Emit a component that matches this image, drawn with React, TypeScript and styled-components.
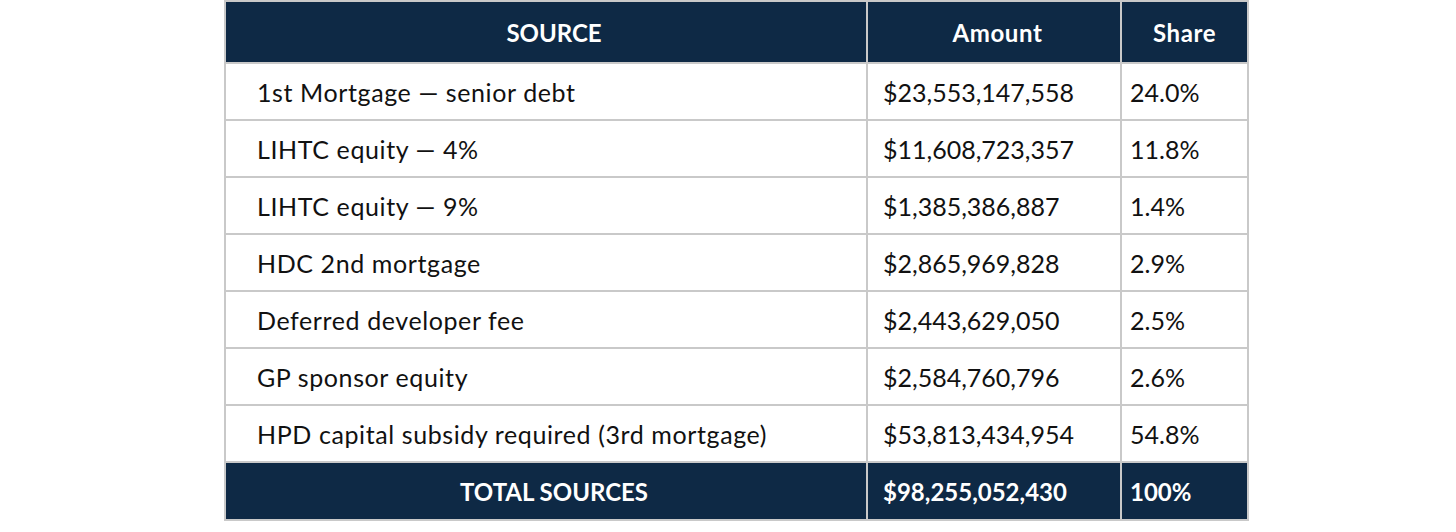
import React from 'react';
import styled, { createGlobalStyle } from 'styled-components';

type SourceRow = {
  id: number;
  label: string;
  amount: string;
  share: string;
};

const ROWS: SourceRow[] = [
  { id: 1, label: '1st Mortgage — senior debt', amount: '$23,553,147,558', share: '24.0%' },
  { id: 2, label: 'LIHTC equity — 4%', amount: '$11,608,723,357', share: '11.8%' },
  { id: 3, label: 'LIHTC equity — 9%', amount: '$1,385,386,887', share: '1.4%' },
  { id: 4, label: 'HDC 2nd mortgage', amount: '$2,865,969,828', share: '2.9%' },
  { id: 5, label: 'Deferred developer fee', amount: '$2,443,629,050', share: '2.5%' },
  { id: 6, label: 'GP sponsor equity', amount: '$2,584,760,796', share: '2.6%' },
  { id: 7, label: 'HPD capital subsidy required (3rd mortgage)', amount: '$53,813,434,954', share: '54.8%' }
];

const GlobalStyle = createGlobalStyle`
  html, body {
    margin: 0;
    padding: 0;
    background: #fff;
  }
  body {
    font-family: 'Lato', 'Liberation Sans', sans-serif;
  }
`;

const Page = styled.div`
  width: 1456px;
  height: 532px;
  display: flex;
  justify-content: center;
  padding-left: 17px;
  box-sizing: border-box;
`;

const Table = styled.table`
  width: 1024px;
  height: 521px;
  border-collapse: collapse;
  table-layout: fixed;
  border: 2px solid #c9c9c9;
  border-top: 1px solid #c9c9c9;
  font-family: 'Lato', 'Liberation Sans', sans-serif;
  color: #111;
`;

const DarkRow = styled.tr<{ height: number }>`
  height: ${(p) => p.height}px;
  background: #0e2945;
  color: #fff;
  font-size: 24px;
  font-weight: 700;
`;

const BodyRow = styled.tr`
  height: 57px;
  background: #fff;
  font-size: 25px;
`;

const Cell = styled.td<{ pad: string; align?: 'left' | 'center'; spacing?: number }>`
  padding: ${(p) => p.pad};
  text-align: ${(p) => p.align || 'left'};
  letter-spacing: ${(p) => p.spacing || 0}px;
  border: 2px solid #c9c9c9;
  white-space: nowrap;
  vertical-align: middle;
`;

const HeadCell = styled(Cell).attrs({ as: 'th' })``;

const SOURCE_PAD = '0 15px 0 31px';
const AMOUNT_PAD = '0 8px 0 15px';
const SHARE_PAD = '0 8px 0 8px';

export default function App() {
  return (
    <Page>
      <GlobalStyle />
      <Table>
        <colgroup>
          <col style={{ width: 642 }} />
          <col style={{ width: 254 }} />
          <col style={{ width: 127 }} />
        </colgroup>
        <thead>
          <DarkRow height={62}>
            <HeadCell pad={SOURCE_PAD} align="center">SOURCE</HeadCell>
            <HeadCell pad={AMOUNT_PAD} align="center" spacing={0.6}>Amount</HeadCell>
            <HeadCell pad={SHARE_PAD} align="center" spacing={0.6}>Share</HeadCell>
          </DarkRow>
        </thead>
        <tbody>
          {ROWS.map((row) => (
            <BodyRow key={row.id}>
              <Cell pad={SOURCE_PAD} spacing={0.6}>{row.label}</Cell>
              <Cell pad={AMOUNT_PAD}>{row.amount}</Cell>
              <Cell pad={SHARE_PAD}>{row.share}</Cell>
            </BodyRow>
          ))}
          <DarkRow height={58}>
            <Cell pad={SOURCE_PAD} align="center">TOTAL SOURCES</Cell>
            <Cell pad={AMOUNT_PAD}>$98,255,052,430</Cell>
            <Cell pad={SHARE_PAD}>100%</Cell>
          </DarkRow>
        </tbody>
      </Table>
    </Page>
  );
}
